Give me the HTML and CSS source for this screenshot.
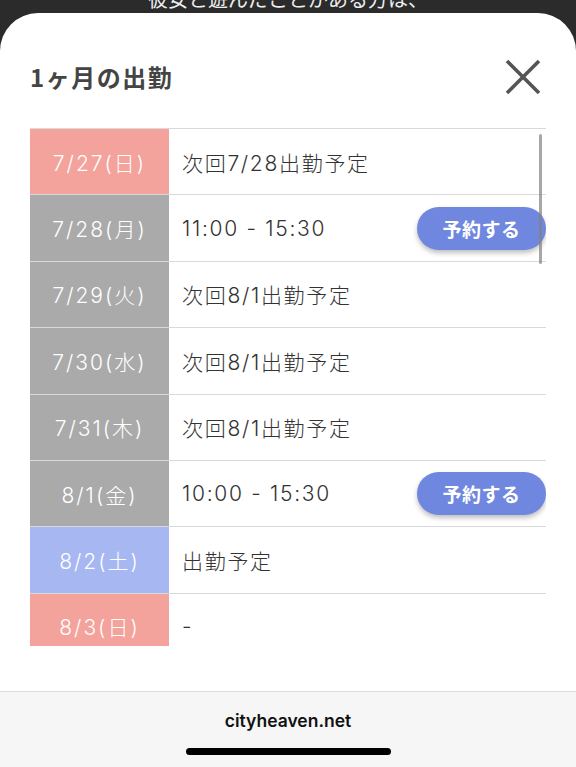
FILE: index.html
```html
<!DOCTYPE html>
<html lang="ja">
<head>
    <meta charset="UTF-8">
    <meta name="viewport" content="width=device-width, initial-scale=1.0">
    <title>1ヶ月の出勤</title>
    <link rel="stylesheet" href="styles.css">
</head>
<body>
    <div class="backdrop">
        <p class="backdrop-text">彼女と遊んだことがある方は、</p>
    </div>

    <div class="sheet">
        <div class="sheet-header">
            <h1>1ヶ月の出勤</h1>
            <button class="close-btn" aria-label="閉じる">
                <svg width="36" height="36" viewBox="0 0 36 36">
                    <path d="M2 2 L34 34 M34 2 L2 34" stroke="#555" stroke-width="3.6" stroke-linecap="butt"/>
                </svg>
            </button>
        </div>

        <div class="schedule">
            <div class="row">
                <div class="date sun">7/27(日)</div>
                <div class="info">次回7/28出勤予定</div>
            </div>
            <div class="row">
                <div class="date">7/28(月)</div>
                <div class="info">11:00 - 15:30 <a class="reserve-btn">予約する</a></div>
            </div>
            <div class="row">
                <div class="date">7/29(火)</div>
                <div class="info">次回8/1出勤予定</div>
            </div>
            <div class="row">
                <div class="date">7/30(水)</div>
                <div class="info">次回8/1出勤予定</div>
            </div>
            <div class="row">
                <div class="date">7/31(木)</div>
                <div class="info">次回8/1出勤予定</div>
            </div>
            <div class="row">
                <div class="date">8/1(金)</div>
                <div class="info">10:00 - 15:30 <a class="reserve-btn">予約する</a></div>
            </div>
            <div class="row">
                <div class="date sat">8/2(土)</div>
                <div class="info">出勤予定</div>
            </div>
            <div class="row">
                <div class="date sun">8/3(日)</div>
                <div class="info">-</div>
            </div>
            <div class="scrollbar"></div>
        </div>

        <div class="spacer"></div>

        <div class="browser-bar">
            <div class="url">cityheaven.net</div>
            <div class="home-indicator"></div>
        </div>
    </div>
</body>
</html>
```

FILE: styles.css
```css
body {
    margin: 0;
    background-color: #2b2b2b;
    font-family: Inter, "Noto Sans CJK JP", sans-serif;
    height: 767px;
    overflow: hidden;
}
.backdrop {
    height: 13px;
    overflow: hidden;
}
.backdrop-text {
    margin: -12px 0 0;
    text-align: center;
    color: #eee;
    font-family: "Noto Sans CJK JP", sans-serif;
    font-size: 20px;
    line-height: 22px;
}
.sheet {
    height: 754px;
    background-color: #fff;
    border-radius: 38px 38px 0 0;
    display: flex;
    flex-direction: column;
}
.sheet-header {
    height: 115px;
    box-sizing: border-box;
    padding: 12px 35px 0 30px;
    display: flex;
    align-items: center;
    justify-content: space-between;
}
h1 {
    margin: 0;
    font-family: "Noto Sans CJK JP", sans-serif;
    font-size: 24px;
    font-weight: 700;
    color: #444;
    letter-spacing: 1.5px;
}
.close-btn {
    border: none;
    background: none;
    padding: 0;
    width: 36px;
    height: 36px;
    display: block;
}
.close-btn svg {
    display: block;
}
.schedule {
    position: relative;
    margin: 0 30px;
    height: 517px;
    overflow: hidden;
    border-top: 1px solid #d9d9d9;
}
.row {
    display: grid;
    grid-template-columns: 139px 1fr;
    height: 66.4px;
    border-bottom: 1px solid #d9d9d9;
    box-sizing: border-box;
}
.date {
    background-color: #aaaaaa;
    color: #fff;
    font-size: 21px;
    font-weight: 300;
    letter-spacing: 2px;
    display: flex;
    align-items: center;
    justify-content: center;
}
.date.sun {
    background-color: #f4a29c;
}
.date.sat {
    background-color: #a6b7f1;
}
.info {
    display: flex;
    align-items: center;
    justify-content: space-between;
    padding-left: 13px;
    font-size: 21px;
    font-weight: 300;
    letter-spacing: 1.7px;
    color: #333;
}
.reserve-btn {
    width: 129px;
    height: 43px;
    border-radius: 22px;
    background-color: #6f87de;
    color: #fff;
    font-family: "Noto Sans CJK JP", sans-serif;
    font-size: 19px;
    font-weight: 700;
    letter-spacing: 0.5px;
    display: flex;
    align-items: center;
    justify-content: center;
    box-shadow: 0 3px 5px rgba(0, 0, 0, 0.25);
}
.scrollbar {
    position: absolute;
    top: 5px;
    right: 4px;
    width: 3px;
    height: 130px;
    border-radius: 2px;
    background-color: rgba(130, 130, 130, 0.7);
}
.spacer {
    height: 45px;
}
.browser-bar {
    flex: 1;
    background-color: #f6f6f6;
    border-top: 1px solid #dcdcdc;
    display: flex;
    flex-direction: column;
    align-items: center;
}
.url {
    margin-top: 19px;
    font-size: 17.5px;
    font-weight: 600;
    line-height: 20px;
    color: #111;
}
.home-indicator {
    margin-top: 17px;
    width: 205px;
    height: 7px;
    border-radius: 4px;
    background-color: #000;
}
```
